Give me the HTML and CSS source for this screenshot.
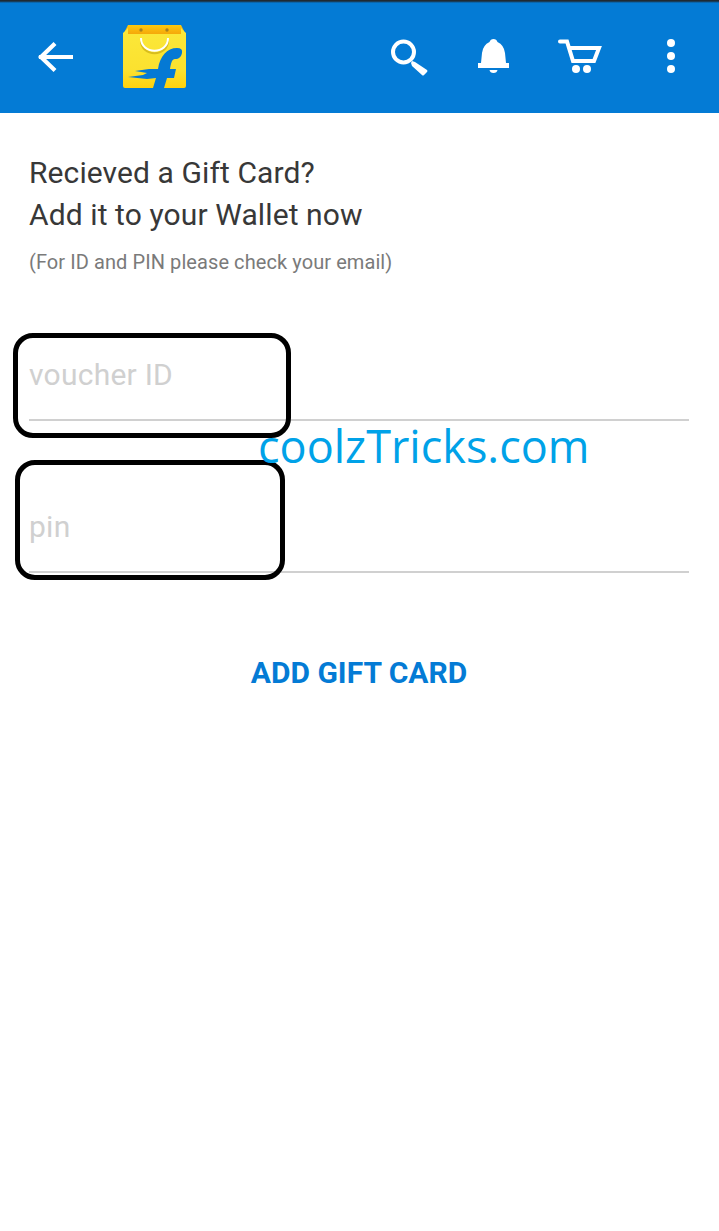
FILE: index.html
```html
<!DOCTYPE html>
<html lang="en">

<head>
    <meta charset="UTF-8">
    <meta name="viewport" content="width=device-width, initial-scale=1.0">
    <title>Add Gift Card</title>
    <link rel="stylesheet" href="styles.css">
</head>

<body>
    <div class="header">
        <a class="back" href="#">
            <svg width="36" height="30" viewBox="0 0 36 30">
                <path d="M4 15H34M16.500 3L4 15L16.500 27" fill="none" stroke="#fff" stroke-width="4.200" stroke-linecap="square" />
            </svg>
        </a>
        <svg class="logo" width="64" height="64" viewBox="0 0 64 64">
            <defs>
                <linearGradient id="bag" x1="0" y1="0" x2="0" y2="1">
                    <stop offset="0" stop-color="#fbe83a" />
                    <stop offset="0.7" stop-color="#fbe12f" />
                    <stop offset="1" stop-color="#ffd10d" />
                </linearGradient>
                <linearGradient id="band" x1="0" y1="0" x2="0" y2="1">
                    <stop offset="0" stop-color="#fdc90f" />
                    <stop offset="1" stop-color="#f5a80a" />
                </linearGradient>
            </defs>
            <path d="M5 0H58L61 6V9H2V6Z" fill="url(#band)" />
            <circle cx="18" cy="5" r="1.700" fill="#a9801e" />
            <circle cx="44" cy="5" r="1.700" fill="#a9801e" />
            <path d="M0 8L5 3V9H58V3L63 8V61Q63 63 61 63H2Q0 63 0 61Z" fill="url(#bag)" />
            <path d="M18 14C18 31 45 31 45 14" fill="none" stroke="#d8bd1e" stroke-width="2" transform="translate(0 1.500)" />
            <path d="M18 13C18 30 45 30 45 13" fill="none" stroke="#fff" stroke-width="2" />
            <path d="M30 63L33 53L24 54L5 52L20 50L24 48L12 46L26 44H35C37 31 44 23 54 23Q60 23 59 28C58 32 56 34 52 34C49 34 48 38 47 44H53L51 53H44L41 63Z" fill="#0579d4" />
        </svg>
        <div class="actions">
            <a href="#">
                <svg width="38" height="37" viewBox="0 0 38 37">
                    <circle cx="12.500" cy="13" r="10.500" fill="none" stroke="#fff" stroke-width="4" />
                    <path d="M21 22L24 23L36 31Q37 32 36 33L33 36Q32 37 31 36L21 27L20 24Z" fill="#fff" />
                </svg>
            </a>
            <a href="#">
                <svg width="31" height="34" viewBox="0 0 31 34">
                    <path d="M15.500 0Q18.500 0 19.500 3Q26 6 27 14L28 24H31V29H0V24H3L4 14Q5 6 11.500 3Q12.500 0 15.500 0Z" fill="#fff" />
                    <path d="M11.500 31H19.500Q19 34 15.500 34Q12 34 11.500 31Z" fill="#fff" />
                </svg>
            </a>
            <a href="#">
                <svg width="44" height="34" viewBox="0 0 44 34">
                    <path d="M2 2.500H9L15 22H36L41 9H11" fill="none" stroke="#fff" stroke-width="4" stroke-linecap="round" />
                    <circle cx="18" cy="30" r="4" fill="#fff" />
                    <circle cx="29" cy="30" r="4" fill="#fff" />
                </svg>
            </a>
            <a class="more" href="#">
                <span></span>
                <span></span>
                <span></span>
            </a>
        </div>
    </div>

    <div class="content">
        <h1>Recieved a Gift Card?<br>Add it to your Wallet now</h1>
        <p class="note">(For ID and PIN please check your email)</p>

        <div class="field field-voucher">
            <input type="text" placeholder="voucher ID">
            <div class="mark mark-voucher"></div>
        </div>
        <div class="field field-pin">
            <input type="text" placeholder="pin">
            <div class="mark mark-pin"></div>
        </div>
        <span class="watermark">coolzTricks.com</span>

        <a class="add" href="#">ADD GIFT CARD</a>
    </div>
</body>

</html>
```

FILE: styles.css
```css
/* Reset */
body,
h1,
p {
    margin: 0;
    padding: 0;
}

body {
    font-family: Roboto, sans-serif;
    background-color: #fff;
    color: #333;
}

/* Header */
.header {
    height: 113px;
    box-sizing: border-box;
    display: flex;
    align-items: center;
    background: linear-gradient(#1f2a33 0, #1f2a33 1px, #047bd5 3px);
    padding: 0 0 0 37px;
}

.back {
    display: flex;
    width: 36px;
    margin-right: 50px;
}

.logo {
    display: block;
    margin-top: 1px;
}

.actions {
    display: flex;
    align-items: flex-start;
    margin-left: auto;
    gap: 49px;
    padding: 2px 44px 0 0;
}

.actions a {
    display: flex;
}

.actions .more {
    flex-direction: column;
    gap: 5px;
    margin-left: 16px;
}

.more span {
    width: 8px;
    height: 8px;
    border-radius: 50%;
    background-color: #fff;
}

/* Form */
.content {
    position: relative;
    padding: 39px 30px 0 29px;
}

.content h1 {
    font-size: 30px;
    font-weight: 400;
    line-height: 42px;
    letter-spacing: 0.1px;
    color: #383838;
}

.note {
    margin-top: 12px;
    font-size: 20px;
    line-height: 28px;
    letter-spacing: 0.08px;
    color: #7a7a7a;
}

.field {
    position: relative;
    border-bottom: 2px solid #d0d0d0;
}

.field-voucher {
    margin-top: 67px;
}

.field-pin {
    margin-top: 74px;
}

.field input {
    display: block;
    width: 100%;
    height: 76px;
    box-sizing: border-box;
    border: 0;
    outline: 0;
    padding: 0 0 14px;
    font-family: Roboto, sans-serif;
    font-size: 30px;
    letter-spacing: 0.25px;
    color: #333;
    background: transparent;
}

.field input::placeholder {
    color: #d0d0d0;
    opacity: 1;
}

/* Black marker boxes drawn over the screenshot */
.mark {
    position: absolute;
    box-sizing: border-box;
    border: 5px solid #000;
    border-radius: 20px;
}

.mark-voucher {
    left: -16px;
    top: -10px;
    width: 278px;
    height: 105px;
}

.mark-pin {
    left: -14px;
    top: -35px;
    width: 270px;
    height: 120px;
}

.watermark {
    position: absolute;
    left: 258px;
    top: 303px;
    font-family: "Open Sans", sans-serif;
    font-size: 45px;
    line-height: 60px;
    color: #00a2e8;
    white-space: nowrap;
}

.add {
    display: block;
    margin-top: 82px;
    text-align: center;
    font-size: 30px;
    font-weight: 700;
    line-height: 36px;
    color: #047bd5;
    text-decoration: none;
}
```
